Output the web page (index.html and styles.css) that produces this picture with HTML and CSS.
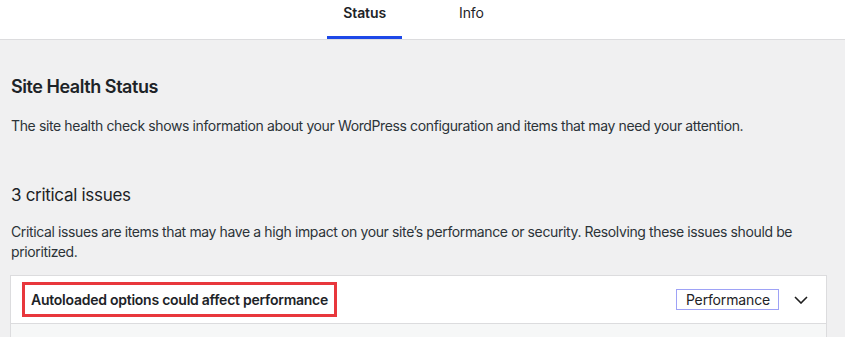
FILE: index.html
```html
<!DOCTYPE html>
<html lang="en">
<head>
<meta charset="utf-8">
<title>Site Health</title>
<link rel="stylesheet" href="styles.css">
</head>
<body>
<header class="health-header">
  <nav class="tabs">
    <a class="tab active" href="#">Status</a>
    <a class="tab" href="#">Info</a>
  </nav>
</header>
<main class="content">
  <h2 class="title">Site Health Status</h2>
  <p class="intro">The site health check shows information about your WordPress configuration and items that may need your attention.</p>
  <h3 class="issues-title">3 critical issues</h3>
  <p class="issues-desc">Critical issues are items that may have a high impact on your site’s performance or security. Resolving these issues should be prioritized.</p>
  <section class="card">
    <div class="card-head">
      <span class="issue-name">Autoloaded options could affect performance</span>
      <span class="badge">Performance</span>
      <svg class="chevron" width="14" height="8" viewBox="0 0 14 8" aria-hidden="true"><path d="M1 1 L7 7 L13 1" fill="none" stroke="#1e1e1e" stroke-width="1.6"/></svg>
    </div>
    <div class="card-body"></div>
  </section>
</main>
</body>
</html>
```
FILE: styles.css
```css
* { box-sizing: border-box; }
html, body { margin: 0; padding: 0; }
body {
  background: #f0f0f1;
  font-family: Inter, "Noto Sans", sans-serif;
  color: #1d2327;
  font-size: 14px;
  letter-spacing: -0.38px;
}
.health-header {
  background: #fff;
  border-bottom: 1px solid #dcdcde;
  text-align: center;
  padding-right: 9px;
}
.tabs {
  display: inline-grid;
  grid-template-columns: 1fr 1fr;
}
.tab {
  display: block;
  margin: 0 16px;
  padding: 3px 16px 16px;
  line-height: 20px;
  color: #1d2327;
  text-decoration: none;
  font-size: 14px;
  letter-spacing: -0.1px;
}
.tab.active {
  font-weight: 600;
  box-shadow: inset 0 -3px #1d48e8;
}
.content {
  padding: 35px 18px 0 10px;
}
.title {
  margin: 0;
  font-size: 18px;
  line-height: 24px;
  font-weight: 600;
  padding-left: 1px;
  letter-spacing: -0.45px;
}
.intro {
  margin: 17px 0 0;
  line-height: 20px;
  color: #2c3338;
  padding-left: 1px;
}
.issues-title {
  margin: 47px 0 0;
  font-size: 17px;
  line-height: 24px;
  font-weight: 400;
  padding-left: 1px;
  letter-spacing: -0.3px;
}
.issues-desc {
  margin: 15px 0 0;
  line-height: 19.6px;
  color: #2c3338;
  padding-left: 1px;
}
.card {
  margin-top: 14px;
  background: #fff;
  border: 1px solid #dcdcde;
}
.card-head {
  display: flex;
  align-items: center;
  height: 48px;
  padding: 0 18px 0 11px;
  border-bottom: 1px solid #dcdcde;
}
.issue-name {
  border: 3px solid #e8373c;
  padding: 0 6px;
  height: 35px;
  display: flex;
  align-items: center;
  font-weight: 600;
  color: #1d2327;
  letter-spacing: -0.25px;
}
.badge {
  margin-left: auto;
  border: 1px solid #9ea2f6;
  padding: 0 8px 0 9px;
  line-height: 19px;
  color: #1d2327;
  letter-spacing: -0.15px;
}
.chevron {
  margin-left: 15px;
  display: block;
}
.card-body {
  height: 40px;
  background: #f6f7f7;
}
```
